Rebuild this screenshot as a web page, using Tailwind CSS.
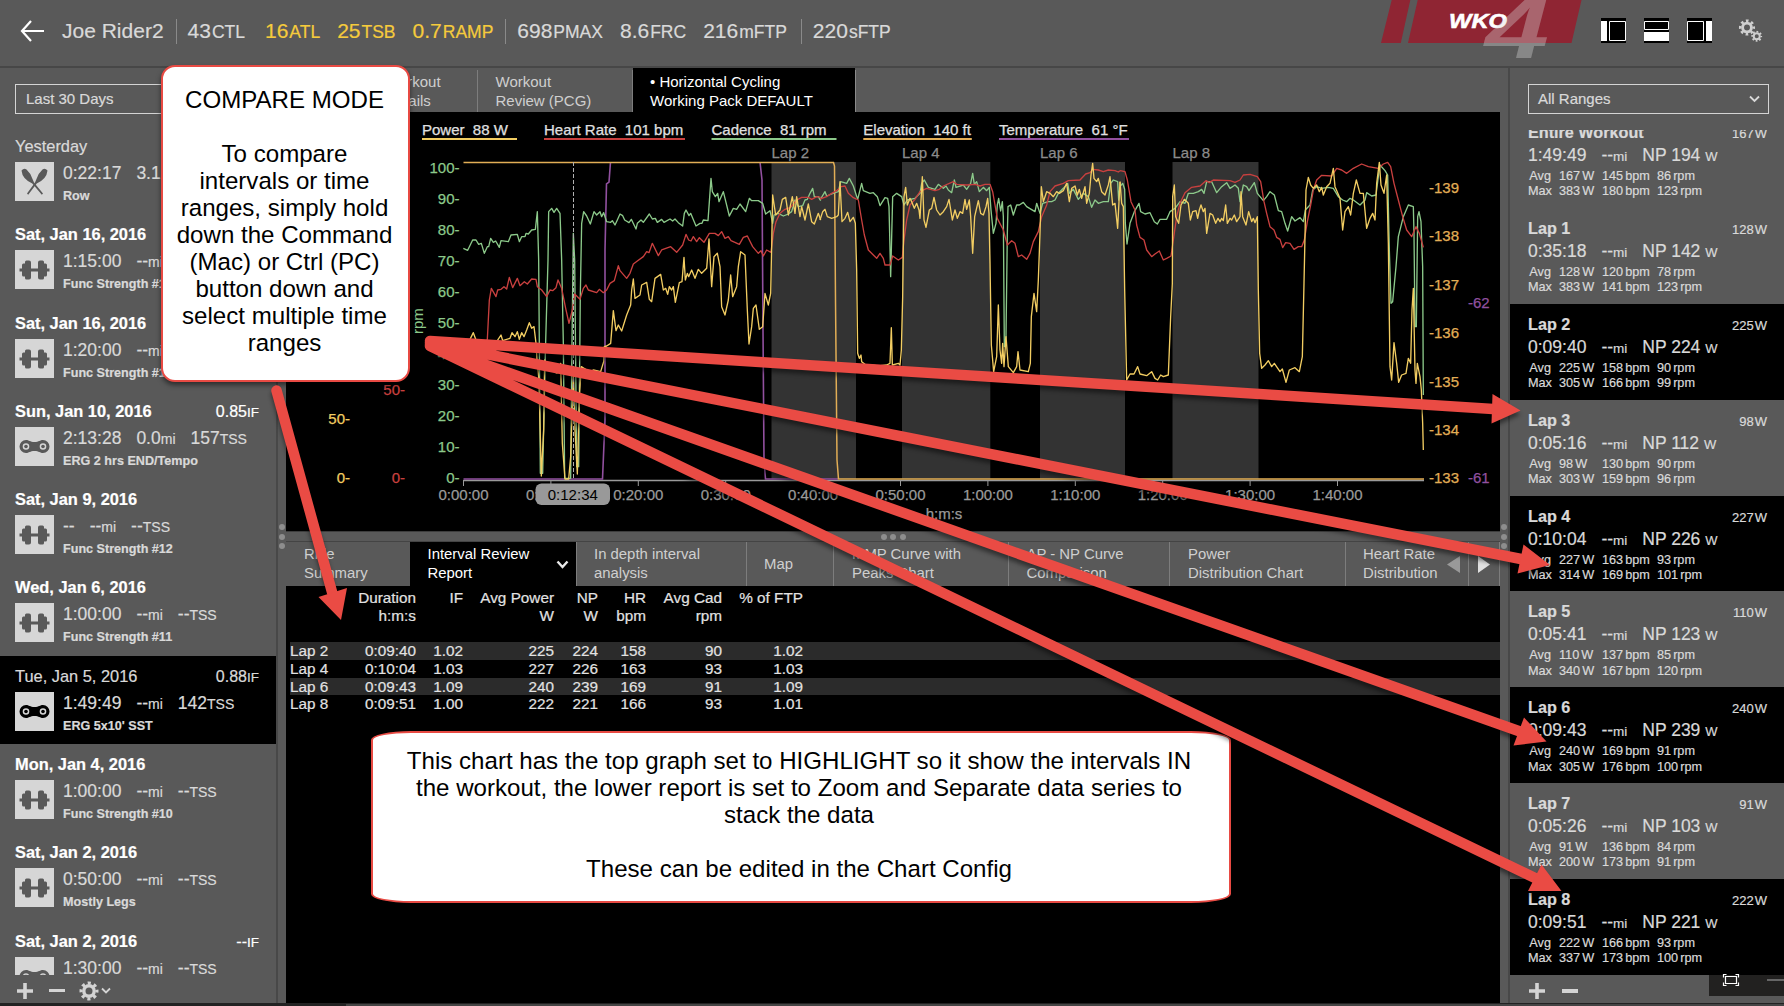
<!DOCTYPE html>
<html lang="en">
<head>
  <meta charset="UTF-8">
  <meta name="viewport" content="width=device-width, initial-scale=1.0">
  <title>WKO4 - Joe Rider2</title>
  <script src="https://cdn.jsdelivr.net/npm/@tailwindcss/browser@4"></script>
</head>
<body class="w-[1784px] h-[1006px] overflow-hidden relative flex flex-col bg-[#595959] text-[#d9d9d9] font-['Liberation_Sans',Arial,sans-serif]">

  <!-- Icon shapes -->
  <svg class="hidden">
    <symbol id="icon-strength" viewBox="0 0 39 39">
      <path d="M4.500 18.500h2.500v-3.500q0-1.500 1.500-1.500h1.500v-1.500q0-1.500 1.500-1.500h2.500q2 0 2 2v6h7v-6q0-2 2-2h2.500q1.500 0 1.500 1.500v1.500h1.500q1.500 0 1.500 1.500v3.500h2.500v3h-2.500v3.500q0 1.500-1.500 1.500h-1.500v1.500q0 1.500-1.500 1.500h-2.500q-2 0-2-2v-6h-7v6q0 2-2 2h-2.500q-1.500 0-1.500-1.500v-1.500h-1.500q-1.500 0-1.500-1.500v-3.500h-2.500z"/>
    </symbol>
    <symbol id="icon-bike" viewBox="0 0 39 39">
      <path fill-rule="evenodd" d="M11 13c3 0 4 2 8.500 2s5.500-2 8.500-2a6.500 6.500 0 0 1 0 13c-3 0-4-2-8.500-2s-5.500 2-8.500 2a6.500 6.500 0 0 1 0-13zM11 16.200a3.300 3.300 0 1 0 0 6.600a3.300 3.300 0 0 0 0-6.600zM28 16.200a3.300 3.300 0 1 0 0 6.600a3.300 3.300 0 0 0 0-6.600z"/>
      <circle cx="11" cy="19.500" r="1.800"/>
      <circle cx="28" cy="19.500" r="1.800"/>
    </symbol>
    <symbol id="icon-row" viewBox="0 0 39 39">
      <path d="M6.500 8.500q2.500-3 5-1q4 3.500 6 9.500l1.500 3.500l9 11-1.200 1.200-9.500-11.200q-10-4.500-10.800-13z"/>
      <path d="M32.500 8.500q-2.500-3-5-1q-4 3.500-6 9.500l-1.500 3.500l-8 11 1.200 1.200 8.500-11.200q10-4.500 10.800-13z"/>
    </symbol>
    <symbol id="icon-gear" viewBox="0 0 20 20">
      <circle cx="10" cy="10" r="5.200" fill="none" stroke="currentColor" stroke-width="3.400"/>
      <circle cx="10" cy="10" r="8" fill="none" stroke="currentColor" stroke-width="3" stroke-dasharray="3.140 3.143" stroke-dashoffset="1.570"/>
    </symbol>
  </svg>

  <!-- Header -->
  <header class="h-[68px] shrink-0 border-b-2 border-[#474747] flex pl-[20px] [-webkit-text-stroke:0.2px]">
    <div class="flex items-center h-[62px]">
      <svg class="w-[25px] h-[22px] mr-[17px]" viewBox="0 0 25 22" fill="none" stroke="#fff" stroke-width="2.200"><path d="M11 1L2 11l9 10M2 11h22"/></svg>
      <div id="stats" class="flex items-center text-[21px] whitespace-nowrap"></div>
    </div>
    <svg class="ml-auto w-[210px] h-[60px] shrink-0" viewBox="1380 0 210 60">
      <path fill="#8f2533" d="M1391.700 0h18.600l-9.500 43h-19.800zM1417.700 0h163.800l-10 43h-163.500z"/>
      <text x="1449" y="27.500" textLength="58" lengthAdjust="spacingAndGlyphs" font-size="20.500" font-weight="bold" font-style="italic" fill="#fff" stroke="#fff" stroke-width=".6">WKO</text>
      <text x="1485" y="58" textLength="64" lengthAdjust="spacingAndGlyphs" font-size="86" font-weight="bold" font-style="italic" fill="#d8d8d8" fill-opacity=".36">4</text>
    </svg>
    <svg class="w-[194px] h-[60px] shrink-0" viewBox="1590 0 194 60">
      <path d="M1601 18h25v25h-25zM1644 18h25v25h-25zM1687 18h25v25h-25z"/>
      <path fill="#fff" d="M1601 21h6v20h-6zM1644 32h25v9h-25zM1706 21h6v20h-6z"/>
      <path fill="none" stroke="#fff" d="M1609.500 21.500h16v19h-16zM1644.500 21.500h24v8h-24zM1687.500 21.500h16v19h-16z"/>
      <g class="text-[#cfcfcf]">
        <use href="#icon-gear" x="1738.500" y="19" width="17" height="17"/>
        <use href="#icon-gear" x="1751" y="30.500" width="11.500" height="11.500"/>
      </g>
    </svg>
  </header>

  <div class="flex h-[935px] shrink-0 [-webkit-text-stroke:0.2px]">
    <!-- Workout list -->
    <aside class="w-[276px] shrink-0 flex flex-col">
      <div class="mt-[16px] ml-[15px] w-[242px] h-[30px] border border-[#d4d4d4] shrink-0 flex items-center pl-[10px] text-[15px]">Last 30 Days</div>
      <div id="workouts" class="mt-[12px] h-[849px] overflow-hidden shrink-0"></div>
      <div class="flex items-center pl-[17px] pt-[3px] flex-1 text-[#d4d4d4]">
        <svg class="w-[16px] h-[16px]" viewBox="0 0 16 16" fill="currentColor"><path d="M6.200 0h3.600v6.200h6.200v3.600h-6.200v6.200h-3.600v-6.200h-6.200v-3.600h6.200z"/></svg>
        <div class="ml-[16px] w-[16px] h-[3.500px] bg-[#d4d4d4]"></div>
        <svg class="ml-[14px] w-[20px] h-[20px]"><use href="#icon-gear"/></svg>
        <svg class="ml-[2px] w-[10px] h-[8px]" viewBox="0 0 10 8" fill="none" stroke="currentColor" stroke-width="1.800"><path d="M1 1.500l4 4 4-4"/></svg>
      </div>
    </aside>

    <div class="w-[10px] shrink-0 border-l-2 border-[#484848] pt-[456px] flex flex-col items-center gap-[3.500px]">
      <i class="w-[6px] h-[6px] rounded-full bg-[#8d8d8d]"></i><i class="w-[6px] h-[6px] rounded-full bg-[#8d8d8d]"></i><i class="w-[6px] h-[6px] rounded-full bg-[#8d8d8d]"></i>
    </div>

    <!-- Charts -->
    <main class="w-[1214px] shrink-0 bg-black flex flex-col">
      <nav class="h-[44px] shrink-0 flex pt-[2px] bg-[#595959] text-[15px] leading-[19px] text-[#cfcfcf] [-webkit-text-stroke:0]">
        <div class="w-[191.500px] pl-[99px] flex items-center border-r border-[#7d7d7d]">Workout<br>Details</div>
        <div class="w-[155.500px] pl-[18px] flex items-center border-r border-[#7d7d7d]">Workout<br>Review (PCG)</div>
        <div class="w-[222px] pl-[17px] -mt-[2px] pt-[2px] flex items-center bg-black text-white">• Horizontal Cycling<br>Working Pack DEFAULT</div>
        <div class="border-l border-[#8a8a8a]"></div>
      </nav>
      <svg class="w-[1214px] h-[419px] shrink-0" viewBox="286 112 1214 419" font-size="15" fill="none">
        <g id="legend" fill="#e0e0e0"></g>
        <path fill="#333" d="M771.500 162h84.500v317h-84.500zM902 162h88.300v317h-88.300zM1040 162h85v317h-85zM1172.500 162h86v317h-86z"/>
        <path stroke="#9a9a9a" stroke-width="1.300" d="M463.500 480.500H1424"/>
        <g id="axes"></g>
        <text transform="translate(423 334) rotate(-90)" fill="#8cc98a">rpm</text>

        <!-- temperature and elevation -->
        <path stroke="#91509f" stroke-width="1.600" d="M463.500 479H602.500L605 420V250L606.500 184L609 182L610.500 162M760 162L762 180L763 330L764 460L765.500 479H838"/>
        <path stroke="#e2ae56" stroke-width="1.500" d="M463.500 162.500H833.500L834.500 166L835.500 300L837 460L838.500 479H1424"/>

        <g transform="translate(400 60) scale(.33333)" stroke-width="4" stroke-linejoin="round">
          <polyline stroke="#8cc98a" points="190,565 203,571 218,540 228,540 236,553 244,550 253,580 262,560 266,560 272,535 280,547 287,543 298,562 303,542 325,545 333,525 352,523 358,545 365,530 375,530 378,520 385,522 395,510 406,508 412,455 416,600 421,1240 428,1240 436,880 444,600 446,455 455,445 462,457 470,445 480,460 485,600 490,850 494,1255 512,1255 516,850 520,520 524,600 530,1220 536,1220 541,700 545,490 551,455 560,468 571,492 582,455 590,465 600,455 605,470 611,458 620,485 632,487 637,482 645,495 652,480 660,462 668,467 674,480 687,488 694,478 708,507 712,490 723,480 730,487 748,462 757,477 766,475 772,487 785,478 792,487 810,477 818,483 825,477 835,488 848,498 853,460 858,450 867,467 872,460 888,498 900,490 906,490 910,480 924,482 927,440 933,355 937,395 946,410 953,400 957,425 970,395 975,415 988,468 1000,445 1010,448 1020,432 1037,455 1048,415 1055,422 1075,422 1088,430 1097,462 1110,452 1118,490 1122,465 1135,460 1150,468 1165,462 1175,455 1185,420 1195,440 1208,437 1215,420 1222,418 1230,400 1238,385 1243,410 1255,410 1262,422"/>
          <polyline stroke="#c9403f" points="190,875 250,865 262,838 268,720 274,685 288,710 293,690 303,688 312,680 320,687 328,652 338,683 352,655 360,677 373,665 382,672 395,657 408,658 412,680 425,690 440,710 450,690 458,692 468,683 474,660 485,685 497,745 507,790 517,750 524,702 540,718 550,685 558,675 565,690 590,698 598,688 610,698 620,690 630,670 643,662 655,617 660,632 680,655 690,640 700,612 712,603 730,590 740,575 747,578 757,550 775,587 785,570 812,560 830,577 848,555 858,523 866,540 873,543 880,530 890,545 898,533 912,547 928,520 945,520 955,527 965,515 975,535 985,530 993,542 1018,553 1030,532 1042,528 1058,560 1075,580 1083,572 1090,588 1100,570 1113,577 1120,520 1128,485 1140,460 1155,448 1172,442 1190,420 1205,412 1225,412 1235,418 1250,410 1262,412"/>
          <polyline stroke="#f2cd62" points="190,870 200,850 210,838 220,818 228,840 245,860 260,890 275,850 290,845 303,825 308,842 330,835 336,818 345,830 352,815 358,838 365,818 372,830 380,810 388,788 395,805 402,800 408,850 411,900 416,950 418,1010 424,1248 431,1110 434,900 439,920 455,930 471,940 482,910 487,1150 495,1257 506,1257 512,1190 520,940 525,1110 532,1242 538,1010 544,920 552,925 568,935 580,930 602,935 611,905 613,860 620,858 632,850 640,752 648,812 655,795 665,813 680,765 692,735 695,690 700,657 705,715 720,705 725,675 740,667 748,718 755,725 765,655 782,643 790,690 797,685 803,703 808,680 815,690 820,680 826,727 838,668 846,665 852,592 856,660 862,640 866,650 875,630 885,655 895,628 905,640 920,625 927,537 935,680 942,590 952,580 960,620 965,740 975,765 985,720 992,645 998,710 1010,680 1015,620 1022,575 1035,585 1042,750 1047,852 1055,800 1060,745 1068,735 1078,808 1088,800 1095,700 1105,735 1112,700 1115,560 1118,405 1127,465 1140,450 1147,418 1157,412 1165,465 1177,410 1185,460 1190,410 1200,470 1205,440 1215,480 1225,432 1235,485 1243,492 1255,460 1262,480"/>
        </g>
        <g transform="translate(820 150) scale(.33333)" stroke-width="4" stroke-linejoin="round">
          <polyline stroke="#8cc98a" points="0,150 15,125 20,138 45,128 55,125 62,95 80,100 88,85 100,108 113,148 125,100 130,122 150,130 160,128 172,140 180,167 195,143 203,145 207,170 212,380 218,140 230,130 245,140 252,165 262,150 285,145 300,130 305,100 313,90 325,112 345,118 355,103 370,115 378,108 385,120 395,128 403,90 408,112 430,105 440,118 452,100 458,70 463,103 470,95 478,125 490,112 500,122 508,112 513,180 520,250 528,220 532,165 536,145 542,183 547,155 550,200 553,590 558,560 562,250 564,170 572,165 580,195 590,165 598,165 610,157 620,170 645,185 650,160 660,190 668,160 685,155 695,155 705,150 715,130 730,115 743,100 748,130 760,118 775,148 790,130 805,140 815,172 825,150 835,160 850,155 865,155 872,100 880,90 893,95 896,150 900,110"/>
          <polyline stroke="#c9403f" points="0,147 20,140 35,130 50,122 63,110 75,108 85,130 100,143 115,150 125,210 133,255 145,300 160,315 170,325 180,310 190,325 195,345 210,345 218,318 235,330 247,322 252,270 260,210 270,165 285,148 300,125 320,115 345,122 358,118 370,108 400,95 410,103 440,105 465,103 480,108 495,103 510,103 518,125 525,165 532,205 550,240 562,285 575,272 585,280 595,320 605,315 620,328 630,310 640,275 655,245 665,200 680,165 690,125 705,108 730,100 745,92 780,90 797,72 810,68 818,58 835,60 850,65 865,60 885,62 895,66 900,62"/>
          <polyline stroke="#f2cd62" points="0,210 8,185 15,178 22,200 35,205 50,200 55,195 60,95 66,215 75,205 83,187 90,215 100,202 106,220 110,360 113,610 118,625 123,615 125,635 135,643 150,645 175,648 200,645 210,640 214,533 217,645 235,640 240,645 244,600 248,440 252,140 257,112 262,165 270,145 275,155 283,175 290,160 297,180 300,205 307,80 312,210 318,232 328,180 335,175 342,142 350,180 360,195 370,185 380,170 387,148 397,210 405,180 412,205 420,185 428,190 435,148 440,178 448,150 452,200 458,310 464,200 475,152 482,190 490,195 498,170 503,145 507,190 510,340 514,585 521,665 530,620 535,465 540,600 545,640 548,580 552,650 558,560 565,650 580,668 590,650 594,605 600,660 625,665 631,640 634,500 642,430 650,485 655,390 660,250 664,110 670,155 680,125 690,130 700,140 710,125 718,130 730,122 740,100 748,155 755,115 765,108 772,135 778,118 785,145 795,110 800,160 808,130 813,75 818,40 822,85 830,95 835,85 845,125 855,135 865,105 870,80 878,165 885,160 893,235 900,95"/>
        </g>
        <g transform="translate(1120 150) scale(.33333)" stroke-width="4" stroke-linejoin="round">
          <polyline stroke="#8cc98a" points="0,110 8,100 14,118 16,220 21,282 30,220 43,185 57,160 62,185 75,192 90,188 103,215 112,222 120,208 140,208 150,185 165,175 180,155 195,160 205,130 220,130 235,125 245,118 252,130 260,95 275,95 290,128 305,110 320,98 330,115 345,105 355,115 360,155 370,105 380,110 387,122 403,98 412,130 430,152 440,140 450,125 463,135 475,182 485,185 495,220 503,243 515,200 525,213 540,203 550,215 556,180 570,165 578,120 590,110 605,115 625,112 640,115 655,140 668,150 680,155 690,145 700,150 720,165 735,150 740,128 755,138 768,135 775,80 780,45 795,62 803,75 808,300 813,460 818,455 828,350 835,260 850,200 865,165 880,170 882,250 885,530 889,530 893,200 897,185 903,215 908,350 910,735"/>
          <polyline stroke="#c9403f" points="0,62 15,65 22,90 33,155 45,180 50,225 60,262 72,270 80,300 95,320 105,312 118,303 130,330 140,325 153,318 160,270 170,200 180,160 195,128 215,112 240,108 258,92 268,98 280,90 330,92 345,97 360,90 370,75 390,73 412,80 422,95 432,155 440,190 450,230 462,240 470,262 480,268 488,293 497,278 510,280 522,298 535,290 545,290 553,270 562,215 572,165 580,120 590,90 605,76 635,78 650,55 665,60 680,70 700,55 725,42 745,50 775,55 790,42 803,37 812,50 822,100 835,150 848,200 860,240 875,260 888,230 898,250 910,292"/>
          <polyline stroke="#f2cd62" points="0,95 5,160 10,170 14,420 20,690 30,672 42,672 53,650 60,672 80,677 95,665 105,685 113,690 122,675 130,680 145,675 152,500 157,400 158,140 163,105 167,200 176,220 183,165 193,148 205,160 211,210 218,185 228,182 233,205 238,180 243,165 250,185 255,175 260,250 270,190 278,195 287,220 294,205 300,215 305,205 310,212 317,165 322,220 330,205 335,210 343,195 350,215 360,200 363,125 368,200 378,225 386,185 395,215 400,205 405,218 412,200 415,420 419,610 425,655 435,645 445,632 455,650 463,640 480,665 487,657 498,697 508,660 525,653 538,665 547,620 552,400 558,120 565,82 572,105 580,115 590,105 598,125 605,112 610,135 620,110 630,100 640,55 645,110 660,145 668,240 675,185 685,170 692,195 700,130 709,90 720,130 730,130 740,235 750,205 758,190 765,210 770,100 778,37 783,105 792,130 800,75 805,280 810,650 815,690 822,578 830,640 836,697 845,675 858,670 865,625 872,640 876,480 880,415 885,660 888,700 892,640 900,680 904,720 908,820 910,900"/>
        </g>

        <path stroke="#b0b0b0" stroke-dasharray="4 2" d="M573.500 162v317"/>
        <rect x="535.500" y="483.500" width="74.500" height="21.500" rx="6" fill="#999"/>
        <text x="572.800" y="500" text-anchor="middle" fill="#000">0:12:34</text>
      </svg>

      <div class="h-[10px] shrink-0 bg-[#595959] border-t border-[#3d3d3d] flex items-center justify-center gap-[3.500px]">
        <i class="w-[6px] h-[6px] rounded-full bg-[#8d8d8d]"></i><i class="w-[6px] h-[6px] rounded-full bg-[#8d8d8d]"></i><i class="w-[6px] h-[6px] rounded-full bg-[#8d8d8d]"></i>
      </div>
      <nav class="h-[45px] shrink-0 flex bg-[#595959] border-t border-[#444] text-[14.9px] leading-[19px] text-[#cfcfcf] whitespace-nowrap [-webkit-text-stroke:0]">
        <div class="w-[124px] shrink-0 pl-[18px] flex items-center">Ride<br>Summary</div>
        <div class="w-[166px] shrink-0 pl-[17.500px] pr-[7px] flex items-center justify-between bg-black text-white">
          <span>Interval Review<br>Report</span>
          <svg class="w-[13px] h-[9px]" viewBox="0 0 13 9" fill="none" stroke="#e8e8e8" stroke-width="2.400"><path d="M1.500 1.500l5 5.500 5-5.500"/></svg>
        </div>
        <div class="w-[171px] shrink-0 pl-[17px] flex items-center border-x border-[#7d7d7d]">In depth interval<br>analysis</div>
        <div class="w-[87px] shrink-0 pl-[17px] flex items-center border-r border-[#7d7d7d]">Map</div>
        <div class="w-[175px] shrink-0 pl-[18px] flex items-center border-r border-[#7d7d7d]">MMP Curve with<br>Peaks Chart</div>
        <div class="w-[161px] shrink-0 pl-[17.500px] flex items-center border-r border-[#7d7d7d]">AP - NP Curve<br>Comparison</div>
        <div class="w-[176px] shrink-0 pl-[18px] flex items-center border-r border-[#7d7d7d]">Power<br>Distribution Chart</div>
        <div class="w-[123px] shrink-0 pl-[17px] pr-[8px] flex items-center justify-between border-r border-[#7d7d7d]">
          <span>Heart Rate<br>Distribution</span>
          <svg class="w-[13px] h-[17px]" viewBox="0 0 13 17" fill="#999"><path d="M13 0v17L0 8.500z"/></svg>
        </div>
        <div class="flex-1 pl-[9px] flex items-center border-r border-[#7d7d7d]">
          <svg class="w-[12px] h-[17px]" viewBox="0 0 12 17" fill="#e0e0e0"><path d="M0 0v17L12 8.500z"/></svg>
        </div>
      </nav>

      <!-- Interval report -->
      <div class="pl-[4px] pt-[3px] text-[15.3px] text-[#e2e2e2]">
        <div class="grid grid-cols-[126px_47px_91px_44px_48px_76px_81px] h-[53px] leading-[18px] text-right whitespace-nowrap">
          <div>Duration<br>h:m:s</div><div>IF</div><div>Avg Power<br>W</div><div>NP<br>W</div><div>HR<br>bpm</div><div>Avg Cad<br>rpm</div><div>% of FTP</div>
        </div>
        <div id="intervals"></div>
      </div>
    </main>

    <div class="w-[10px] shrink-0 border-r-2 border-[#484848] pt-[456px] flex flex-col items-center gap-[3.500px]">
      <i class="w-[6px] h-[6px] rounded-full bg-[#8d8d8d]"></i><i class="w-[6px] h-[6px] rounded-full bg-[#8d8d8d]"></i><i class="w-[6px] h-[6px] rounded-full bg-[#8d8d8d]"></i>
    </div>

    <!-- Ranges -->
    <aside class="w-[274px] shrink-0 flex flex-col">
      <div class="mt-[16px] ml-[18px] w-[241px] h-[30px] border border-[#d4d4d4] shrink-0 flex items-center justify-between pl-[9px] pr-[8px] text-[15px]">
        All Ranges
        <svg class="w-[11px] h-[8px]" viewBox="0 0 11 8" fill="none" stroke="currentColor" stroke-width="1.800"><path d="M1 1.500l4.500 4.500 4.500-4.500"/></svg>
      </div>
      <div class="mt-[16px] h-[845px] overflow-hidden shrink-0">
        <div id="ranges" class="-mt-[18px]"></div>
      </div>
      <div class="flex-1 flex items-start">
        <svg class="mt-[8px] ml-[19px] w-[16px] h-[16px]" viewBox="0 0 16 16" fill="#d4d4d4"><path d="M6.200 0h3.600v6.200h6.200v3.600h-6.200v6.200h-3.600v-6.200h-6.200v-3.600h6.200z"/></svg>
        <div class="mt-[14px] ml-[17px] w-[16px] h-[3.500px] bg-[#d4d4d4]"></div>
        <svg class="ml-auto w-[75px] h-[21px] overflow-visible" viewBox="0 0 75 21" fill="none" stroke="#fff" stroke-width="1.200">
          <path fill="#222120" stroke="none" d="M0 0h75v21h-75z"/>
          <path d="M16.500 1.500h11v7h-11zM14.500 2.500v-3h3M26.500-.5h3v3M14.500 7.500v3h3M26.500 10.500h3v-3"/>
          <path stroke="#666" stroke-width="2" d="M58 5h17"/>
        </svg>
      </div>
    </aside>
  </div>
  <div class="h-[3px] flex bg-[#222]"><div class="ml-[346px] mt-[1px] flex-1 bg-[#444]"></div></div>

  <!-- Notes -->
  <div class="absolute left-[161px] top-[65px] w-[249px] h-[317px] rounded-[14px] border-2 border-[#e84a43] bg-white text-black text-[24.1px] leading-[27px] text-center pt-[18.5px] pr-[2px] shadow-[0_3px_5px_rgba(0,0,0,0.5)] whitespace-nowrap">
    COMPARE MODE<br><br>To compare<br>intervals or time<br>ranges, simply hold<br>down the Command<br>(Mac) or Ctrl (PC)<br>button down and<br>select multiple time<br>ranges
  </div>
  <div class="absolute left-[371px] top-[730.5px] w-[860px] h-[172px] rounded-[40px/9px] border-2 border-[#e84a43] bg-white text-black text-[24.1px] leading-[27px] text-center pt-[14px] pr-[4px] whitespace-nowrap">
    This chart has the top graph set to HIGHLIGHT so it show the intervals IN<br>the workout, the lower report is set to Zoom and Separate data series to<br>stack the data<br><br>These can be edited in the Chart Config
  </div>
  <svg class="absolute left-0 top-0 w-[1784px] h-[1006px] drop-shadow-[0_4px_2px_rgba(0,0,0,0.45)]" viewBox="0 0 1784 1006" fill="#ea4b44" stroke="#ea4b44" stroke-linecap="round">
    <path stroke-width="10.500" fill="none" d="M276.500 390.500L332 592M430 341L1493 409M430 343L1521 559M430 345L1520 731.500M430 346L1535 878"/>
    <path stroke="none" d="M318.500 597L347 588L341 620zM1492.500 394L1491.500 423.500L1520.500 410.500zM1523.500 544.500L1517.500 573.500L1550 565zM1524 717.500L1513.500 745.500L1546.500 741.500zM1541.500 864.500L1528 891H1561.500z"/>
  </svg>

  <script>
    const stats = [
      ['43', 'CTL', 'mr-[20px]'],
      ['16', 'ATL', 'mr-[17px] text-[#f5cb3c]'],
      ['25', 'TSB', 'mr-[17px] text-[#f5cb3c]'],
      ['0.7', 'RAMP', 'mr-[12px] text-[#f5cb3c]'],
      null,
      ['698', 'PMAX', 'mr-[17px]'],
      ['8.6', 'FRC', 'mr-[17px]'],
      ['216', 'mFTP', 'mr-[14px]'],
      null,
      ['220', 'sFTP', '']
    ];
    const divider = '<span class="w-px h-[25px] bg-[#8a8a8a] mr-[11px]"></span>';
    document.getElementById('stats').innerHTML = '<span class="mr-[12px]">Joe Rider2</span>' + divider +
      stats.map(s => s ? `<span class="${s[2]}">${s[0]}<span class="text-[17.5px] ml-[1px]">${s[1]}</span></span>` : divider).join('');

    // date, IF, icon, time, distance, TSS, name
    const workouts = [
      ['Yesterday', '', 'row', '0:22:17', '3.1', '--', 'Row'],
      ['Sat, Jan 16, 2016', '', 'strength', '1:15:00', '--', '--', 'Func Strength #14'],
      ['Sat, Jan 16, 2016', '', 'strength', '1:20:00', '--', '--', 'Func Strength #13'],
      ['Sun, Jan 10, 2016', '0.85', 'bike', '2:13:28', '0.0', '157', 'ERG 2 hrs END/Tempo'],
      ['Sat, Jan 9, 2016', '', 'strength', '--', '--', '--', 'Func Strength #12'],
      ['Wed, Jan 6, 2016', '', 'strength', '1:00:00', '--', '--', 'Func Strength #11'],
      ['Tue, Jan 5, 2016', '0.88', 'bike', '1:49:49', '--', '142', "ERG 5x10' SST"],
      ['Mon, Jan 4, 2016', '', 'strength', '1:00:00', '--', '--', 'Func Strength #10'],
      ['Sat, Jan 2, 2016', '', 'strength', '0:50:00', '--', '--', 'Mostly Legs'],
      ['Sat, Jan 2, 2016', '--', 'bike', '1:30:00', '--', '--', '']
    ];
    document.getElementById('workouts').innerHTML = workouts.map((w, i) => `
      <div class="h-[88.3px] pl-[15px] pt-[10px] pr-[17px] ${i === 6 ? 'bg-black' : ''}">
        <div class="flex justify-between items-baseline h-[26px] leading-[20px] text-[16.4px] ${i === 0 || i === 6 ? '' : 'font-bold text-white'}">
          <span>${w[0]}</span>
          <span class="font-normal text-[16px]">${w[1]}${w[1] ? '<span class="text-[13.5px]">IF</span>' : ''}</span>
        </div>
        <div class="flex">
          <svg class="w-[39px] h-[39px] shrink-0 bg-[#d6d6d6] ${i === 6 ? 'fill-black' : 'fill-[#595959]'}"><use href="#icon-${w[2]}"/></svg>
          <div class="ml-[9px] whitespace-nowrap">
            <div class="flex gap-[15px] items-baseline leading-[23px] text-[17.5px] h-[26px]">
              <span>${w[3]}</span><span>${w[4]}<span class="text-[14px]">mi</span></span><span>${w[5]}<span class="text-[14px]">TSS</span></span>
            </div>
            <div class="text-[12.6px] leading-[17px] font-bold">${w[6]}</div>
          </div>
        </div>
      </div>`).join('');

    const intervals = [
      ['Lap 2', '0:09:40', '1.02', 225, 224, 158, 90, '1.02'],
      ['Lap 4', '0:10:04', '1.03', 227, 226, 163, 93, '1.03'],
      ['Lap 6', '0:09:43', '1.09', 240, 239, 169, 91, '1.09'],
      ['Lap 8', '0:09:51', '1.00', 222, 221, 166, 93, '1.01']
    ];
    document.getElementById('intervals').innerHTML = intervals.map((r, i) => `
      <div class="grid grid-cols-[50px_76px_47px_91px_44px_48px_76px_81px] h-[17.8px] leading-[18px] text-right whitespace-nowrap ${i % 2 ? '' : 'bg-[#2b2b2b]'}">
        <span class="text-left">${r[0]}</span>${r.slice(1).map(v => `<span>${v}</span>`).join('')}
      </div>`).join('');

    // name, avg W, time, NP, avg/max power, heart rate, cadence
    const ranges = [
      ['Entire Workout', 167, '1:49:49', 194, 167, 145, 86, 383, 180, 123],
      ['Lap 1', 128, '0:35:18', 142, 128, 120, 78, 383, 141, 123],
      ['Lap 2', 225, '0:09:40', 224, 225, 158, 90, 305, 166, 99],
      ['Lap 3', 98, '0:05:16', 112, 98, 130, 90, 303, 159, 96],
      ['Lap 4', 227, '0:10:04', 226, 227, 163, 93, 314, 169, 101],
      ['Lap 5', 110, '0:05:41', 123, 110, 137, 85, 340, 167, 120],
      ['Lap 6', 240, '0:09:43', 239, 240, 169, 91, 305, 176, 100],
      ['Lap 7', 91, '0:05:26', 103, 91, 136, 84, 200, 173, 91],
      ['Lap 8', 222, '0:09:51', 221, 222, 166, 93, 337, 173, 100]
    ];
    const line = (label, w, hr, rpm) => `
      <span class="text-right">${label}</span><span>${w}<span class="ml-[2px]">W</span></span><span>${hr}<span class="ml-[2px]">bpm</span></span><span>${rpm}<span class="ml-[2px]">rpm</span></span>`;
    document.getElementById('ranges').innerHTML = ranges.map((r, i) => `
      <div class="h-[95.9px] pl-[18px] pr-[17px] pt-[10px] whitespace-nowrap ${i > 1 && i % 2 === 0 ? 'bg-black' : ''}">
        <div class="flex justify-between items-baseline leading-[20px] h-[16px]">
          <span class="font-bold text-[16.2px]">${r[0]}</span><span class="text-[13px]">${r[1]}<span class="ml-[1px]">W</span></span>
        </div>
        <div class="flex items-baseline gap-[15px] leading-[22px] h-[30px] pt-[6px] text-[17.5px]">
          <span>${r[2]}</span><span>--<span class="text-[13.5px]">mi</span></span><span>NP ${r[3]} <span class="text-[13px]">W</span></span>
        </div>
        <div class="mt-[1px] grid grid-cols-[23px_35px_47px_50px] gap-x-[8px] text-[12.7px] leading-[15.2px]">
          ${line('Avg', r[4], r[5], r[6])}${line('Max', r[7], r[8], r[9])}
        </div>
      </div>`).join('');

    const legend = [
      [422, 95, 'Power\u00a0 88 W', '#f2cd62'],
      [544, 141, 'Heart Rate\u00a0 101 bpm', '#c9403f'],
      [711.5, 125, 'Cadence\u00a0 81 rpm', '#8cc98a'],
      [863.3, 108.5, 'Elevation\u00a0 140 ft', '#e2ae56'],
      [999, 130, 'Temperature\u00a0 61 °F', '#91509f']
    ];
    document.getElementById('legend').innerHTML = legend.map(([x, w, t, c]) =>
      `<text x="${x}" y="135" stroke="#e0e0e0" stroke-width=".25">${t}</text><rect x="${x}" y="138" width="${w}" height="2" fill="${c}"/>`).join('');

    const label = (x, y, t, color, anchor) => `<text x="${x}" y="${y + 5.3}" fill="${color}" stroke="${color}" stroke-width=".25" text-anchor="${anchor}">${t}</text>`;
    let axes = '';
    for (let i = 0; i <= 10; i++) {
      axes += label(459.5, 478 - i * 31, i * 10 + '-', '#8cc98a', 'end');
      const x = 463.5 + i * 87.4;
      const t = `${Math.floor(i / 6)}:${i % 6}0:00`;
      axes += `<path stroke="#9a9a9a" d="M${x} 480v6"/>` + label(x, 495, t, '#9a9a9a', 'middle');
    }
    for (let i = 0; i <= 6; i++) axes += label(1429, 478 - i * 48.4, '-' + (133 + i), '#e2ae56', 'start');
    axes += label(1468, 478, '-61', '#91509f', 'start') + label(1468, 303, '-62', '#91509f', 'start');
    axes += label(350, 478, '0-', '#f2cd62', 'end') + label(350, 419, '50-', '#f2cd62', 'end');
    axes += label(405, 478, '0-', '#c9403f', 'end') + label(405, 390, '50-', '#c9403f', 'end');
    axes += label(944, 514, 'h:m:s', '#9a9a9a', 'middle');
    [[771.5, 2], [902, 4], [1040, 6], [1172.5, 8]].forEach(([x, n]) => axes += label(x, 153, 'Lap ' + n, '#8c8c8c', 'start'));
    document.getElementById('axes').innerHTML = axes;
  </script>
</body>
</html>
